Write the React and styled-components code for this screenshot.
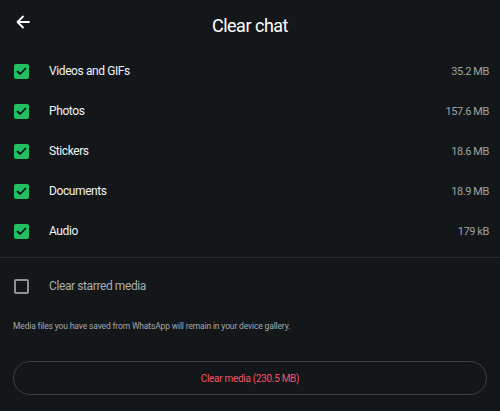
import React from "react";
import styled, { createGlobalStyle } from "styled-components";

const items = [
  { label: "Videos and GIFs", size: "35.2 MB" },
  { label: "Photos", size: "157.6 MB" },
  { label: "Stickers", size: "18.6 MB" },
  { label: "Documents", size: "18.9 MB" },
  { label: "Audio", size: "179 kB" },
];

const App = () => {
  return (
    <>
      <Global />
      <Screen>
        <Header>
          <BackButton>
            <svg width="16" height="16" viewBox="0 0 16 16" fill="none">
              <path
                d="M14 8H2.5M8 2.5L2.5 8L8 13.5"
                stroke="#ffffff"
                strokeWidth="1.8"
                strokeLinecap="round"
                strokeLinejoin="round"
              />
            </svg>
          </BackButton>
          <Title>Clear chat</Title>
        </Header>

        <List>
          {items.map((item) => (
            <Row key={item.label}>
              <Check checked>
                <svg width="11" height="9" viewBox="0 0 11 9" fill="none">
                  <path
                    d="M1.5 4.5L4.2 7L9.5 1.5"
                    stroke="#0b141a"
                    strokeWidth="1.8"
                    strokeLinecap="round"
                    strokeLinejoin="round"
                  />
                </svg>
              </Check>
              <Label>{item.label}</Label>
              <Size>{item.size}</Size>
            </Row>
          ))}
        </List>

        <Divider />

        <Row>
          <Check />
          <Label muted>Clear starred media</Label>
        </Row>

        <Note>Media files you have saved from WhatsApp will remain in your device gallery.</Note>

        <Footer>
          <ClearButton>Clear media (230.5 MB)</ClearButton>
        </Footer>
      </Screen>
    </>
  );
};

const Global = createGlobalStyle`
  body {
    margin: 0;
    background: #13171a;
    font-family: "Roboto", "Liberation Sans", sans-serif;
  }
`;

const Screen = styled.div`
  width: 500px;
  height: 411px;
  background: #13171a;
  display: flex;
  flex-direction: column;
`;

const Header = styled.div`
  height: 47px;
  display: flex;
  align-items: center;
  position: relative;
  justify-content: center;
`;

const BackButton = styled.div`
  position: absolute;
  left: 15px;
  top: 14px;
  display: flex;
`;

const Title = styled.div`
  color: #ffffff;
  font-size: 18px;
  letter-spacing: -0.5px;
  margin-top: 3px;
`;

const List = styled.div`
  display: flex;
  flex-direction: column;
  padding-top: 4px;
  padding-bottom: 6px;
`;

const Row = styled.div`
  height: 40px;
  display: flex;
  align-items: center;
  padding: 0 11px 0 14px;
`;

const Check = styled.div`
  width: 15px;
  height: 15px;
  box-sizing: border-box;
  border-radius: 2px;
  display: flex;
  align-items: center;
  justify-content: center;
  background: ${(p) => (p.checked ? "#21c063" : "transparent")};
  border: ${(p) => (p.checked ? "none" : "2px solid #8d9396")};
`;

const Label = styled.div`
  margin-left: 20px;
  flex: 1;
  font-size: 12px;
  letter-spacing: -0.4px;
  color: ${(p) => (p.muted ? "#a9aeb1" : "#f1f3f4")};
`;

const Size = styled.div`
  font-size: 11px;
  letter-spacing: -0.4px;
  color: #9ea3a6;
`;

const Divider = styled.div`
  height: 1px;
  background: #262b2f;
  margin-bottom: 8px;
`;

const Note = styled.div`
  padding: 15px 13px 0;
  font-size: 8.5px;
  letter-spacing: -0.15px;
  color: #a3a8ab;
`;

const Footer = styled.div`
  padding: 30px 13px 0;
`;

const ClearButton = styled.div`
  height: 34px;
  box-sizing: border-box;
  border: 1px solid #3a4044;
  border-radius: 17px;
  display: flex;
  align-items: center;
  justify-content: center;
  color: #f0556d;
  font-size: 10px;
  letter-spacing: -0.3px;
`;

export default App;
